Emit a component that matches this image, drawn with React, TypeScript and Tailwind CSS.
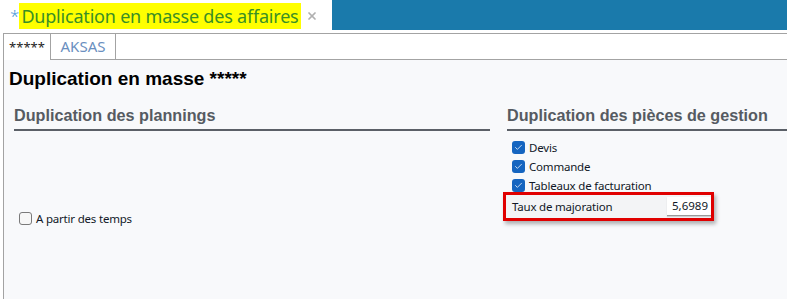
import { Check, X } from "lucide-react";

const ui = "font-['Noto_Sans','Open_Sans',sans-serif]";
const arial = "font-['Liberation_Sans',Arial,sans-serif]";

function Box({ checked }: { checked?: boolean }) {
  return checked ? (
    <span className="flex h-[13px] w-[13px] shrink-0 items-center justify-center rounded-[3px] bg-[#1565c0]">
      <Check size={9} strokeWidth={2} className="text-white" />
    </span>
  ) : (
    <span className="h-[13px] w-[13px] shrink-0 rounded-[3px] border border-[#7a7a7a] bg-[#f7f7f7]" />
  );
}

function CheckRow({ label, checked }: { label: string; checked?: boolean }) {
  return (
    <div className="flex h-[19px] items-center gap-[4px]">
      <Box checked={checked} />
      <span className="text-[11.5px] tracking-[-0.2px] text-[#111827]">{label}</span>
    </div>
  );
}

function SectionTitle({ children }: { children: string }) {
  return (
    <div
      className={`${arial} whitespace-nowrap border-b-2 border-[#5b6067] pb-[4px] text-[16.2px] font-bold leading-[20px] text-[#565b62]`}
    >
      {children}
    </div>
  );
}

export default function App() {
  return (
    <div className={`${ui} flex h-[299px] w-[787px] flex-col overflow-hidden bg-white`}>
      {/* onglet du document */}
      <div className="flex h-[33px] shrink-0">
        <div className="flex h-[31px] w-[332px] shrink-0 items-center">
          <span className="ml-[10px] text-[17px] font-light leading-none text-[#4a9ad8]">*</span>
          <span className="whitespace-nowrap bg-[#ffff00] px-[2px] text-[18px] leading-[26px] tracking-[-0.2px] text-[#3a8f25]">
            Duplication en masse des affaires
          </span>
          <X size={12} strokeWidth={3.5} className="ml-[5px] text-[#b0b0b0]" />
        </div>
        <div className="h-[30px] flex-1 bg-[#1a7aab]" />
      </div>

      {/* onglets */}
      <div className="ml-[3px] flex h-[27px] shrink-0 border-t border-[#a3a3a3] text-[13px]">
        <div className="flex w-[48px] items-center justify-center border-l border-r border-[#a3a3a3] bg-white pt-[2px] text-[#222]">
          *****
        </div>
        <div className="flex w-[65px] items-center justify-center border-r border-b border-[#a3a3a3] text-[15px] text-[#6a8fc0]">
          AKSAS
        </div>
        <div className="flex-1 border-b border-[#a3a3a3]" />
      </div>

      {/* contenu */}
      <div className="ml-[3px] flex-1 border-l border-[#a3a3a3] bg-[#f8f9fb]">
        <h1 className={`${arial} ml-[5px] mt-[7px] text-[19px] font-bold leading-[24px] text-black`}>
          Duplication en masse *****
        </h1>

        <div className="ml-[10px] mt-[14px] flex gap-[17px]">
          <div className="w-[476px] shrink-0">
            <SectionTitle>Duplication des plannings</SectionTitle>
            <div className="ml-[5px] mt-[78px]">
              <CheckRow label="A partir des temps" />
            </div>
          </div>

          <div className="w-[476px] shrink-0">
            <SectionTitle>Duplication des pièces de gestion</SectionTitle>
            <div className="ml-[5px] mt-[7px]">
              <CheckRow label="Devis" checked />
              <CheckRow label="Commande" checked />
              <CheckRow label="Tableaux de facturation" checked />
            </div>
            <div className="-ml-[4px] -mt-[3px] flex h-[29px] w-[211px] items-center justify-between border-[3px] border-[#e00000] bg-[#f3f4f6] pl-[6px] shadow-[2px_3px_4px_rgba(0,0,0,0.3)]">
              <span className="text-[11.5px] tracking-[-0.2px] text-[#111827]">Taux de majoration</span>
              <span className="flex h-[19px] w-[44px] items-center justify-end border-b border-[#9a9a9a] bg-white pr-[3px] text-[11.5px] text-[#111827] shadow-[0_1px_1px_rgba(0,0,0,0.15)]">
                5,6989
              </span>
            </div>
          </div>
        </div>
      </div>
    </div>
  );
}
